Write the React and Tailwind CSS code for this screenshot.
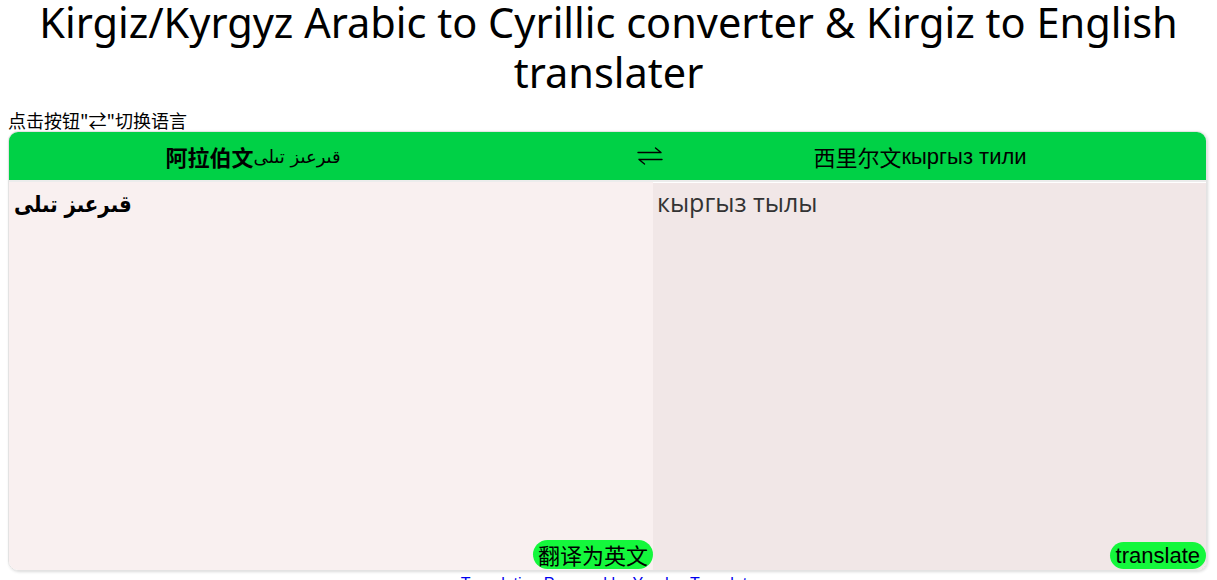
export default function App() {
  return (
    <div className="w-[1217px] h-[580px] overflow-hidden bg-white text-black font-['Noto_Sans','Noto_Sans_CJK_SC',sans-serif]">
      <h1 className="text-center text-[41.5px] leading-[50px] font-normal px-6 -mt-[3px] font-['Noto_Sans',sans-serif]">
        Kirgiz/Kyrgyz Arabic to Cyrillic converter &amp; Kirgiz to English translater
      </h1>
      <div className="px-2 text-[18px] leading-[22px] mt-[12px] font-['Noto_Sans_CJK_SC',sans-serif]">
        点击按钮"⇄"切换语言
      </div>
      <div className="mx-[8px] w-[1199px] rounded-[10px] border border-[#e3e3e3] shadow-[1px_1px_3px_rgba(0,0,0,0.15)] overflow-hidden">
        <div className="flex items-center h-[50px] bg-[#00d146] text-[22px] border-b-2 border-[#ececec]">
          <div className="w-[488px] flex justify-center items-center whitespace-nowrap">
            <span className="font-bold font-['Noto_Sans_CJK_SC',sans-serif]">阿拉伯文</span>
            <span className="text-[18px] font-['DejaVu_Sans',sans-serif]">قىرعىز تىلى</span>
          </div>
          <div className="w-[306px] flex justify-center items-center">
            <svg width="28" height="20" viewBox="0 0 28 20" fill="none" stroke="black" strokeWidth="1.4" strokeLinecap="round">
              <path d="M2 6.5 H25 M19.5 2 L25 6.5" />
              <path d="M26 13.5 H3 M8.5 18 L3 13.5" />
            </svg>
          </div>
          <div className="w-[234px] flex justify-center items-center whitespace-nowrap">
            <span className="font-['Noto_Sans_CJK_SC',sans-serif]">西里尔文</span>
            <span className="font-['Liberation_Sans',sans-serif]">кыргыз тили</span>
          </div>
        </div>
        <div className="flex h-[388px]">
          <div className="w-[644px] bg-[#f9f0f0] flex flex-col">
            <div className="flex-1 px-[5px] pt-[7px] text-[23px] font-bold leading-[30px] font-['DejaVu_Sans',sans-serif]">
              <span className="inline-block scale-x-[0.86] origin-left">قىرعىز تىلى</span>
            </div>
            <div className="flex justify-end pb-[1px]">
              <button className="bg-[#14f73c] rounded-full px-[5px] h-[29px] text-[22px] leading-[29px] font-['Noto_Sans_CJK_SC',sans-serif]">
                翻译为英文
              </button>
            </div>
          </div>
          <div className="flex-1 bg-[#f1e7e7] flex flex-col mt-[1px]">
            <div className="flex-1 px-[4px] pt-[4px] text-[25px] leading-[30px] text-[#333] font-['Open_Sans',sans-serif]">
              кыргыз тылы
            </div>
            <div className="flex justify-end pb-[1px]">
              <button className="bg-[#14f73c] rounded-full px-[6px] h-[27px] text-[22px] leading-[27px] font-['Liberation_Sans',sans-serif]">
                translate
              </button>
            </div>
          </div>
        </div>
      </div>
      <div className="text-center text-[16px] text-[#0000ee] mt-[1px] font-['Liberation_Sans',sans-serif]">
        Translation Powered by Yandex.Translate
      </div>
    </div>
  );
}
